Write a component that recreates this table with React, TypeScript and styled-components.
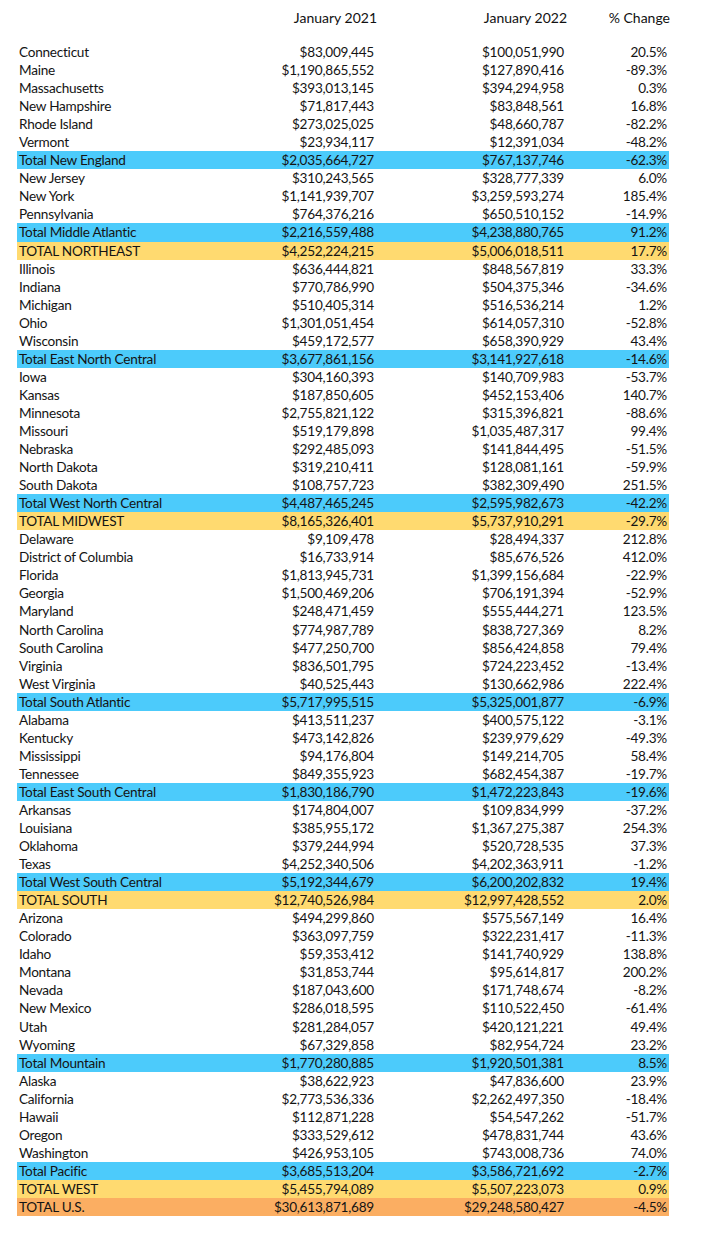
import React from "react";
import styled, { createGlobalStyle } from "styled-components";

const Global = createGlobalStyle`
  html, body { margin: 0; padding: 0; background: #ffffff; }
  body { font-family: "Lato", "Liberation Sans", sans-serif; color: #111; }
`;

type Kind = "state" | "division" | "region" | "total";
type Row = [string, string, string, string, Kind];

const rows: Row[] = [
  ["Connecticut", "$83,009,445", "$100,051,990", "20.5%", "state"],
  ["Maine", "$1,190,865,552", "$127,890,416", "-89.3%", "state"],
  ["Massachusetts", "$393,013,145", "$394,294,958", "0.3%", "state"],
  ["New Hampshire", "$71,817,443", "$83,848,561", "16.8%", "state"],
  ["Rhode Island", "$273,025,025", "$48,660,787", "-82.2%", "state"],
  ["Vermont", "$23,934,117", "$12,391,034", "-48.2%", "state"],
  ["Total New England", "$2,035,664,727", "$767,137,746", "-62.3%", "division"],
  ["New Jersey", "$310,243,565", "$328,777,339", "6.0%", "state"],
  ["New York", "$1,141,939,707", "$3,259,593,274", "185.4%", "state"],
  ["Pennsylvania", "$764,376,216", "$650,510,152", "-14.9%", "state"],
  ["Total Middle Atlantic", "$2,216,559,488", "$4,238,880,765", "91.2%", "division"],
  ["TOTAL NORTHEAST", "$4,252,224,215", "$5,006,018,511", "17.7%", "region"],
  ["Illinois", "$636,444,821", "$848,567,819", "33.3%", "state"],
  ["Indiana", "$770,786,990", "$504,375,346", "-34.6%", "state"],
  ["Michigan", "$510,405,314", "$516,536,214", "1.2%", "state"],
  ["Ohio", "$1,301,051,454", "$614,057,310", "-52.8%", "state"],
  ["Wisconsin", "$459,172,577", "$658,390,929", "43.4%", "state"],
  ["Total East North Central", "$3,677,861,156", "$3,141,927,618", "-14.6%", "division"],
  ["Iowa", "$304,160,393", "$140,709,983", "-53.7%", "state"],
  ["Kansas", "$187,850,605", "$452,153,406", "140.7%", "state"],
  ["Minnesota", "$2,755,821,122", "$315,396,821", "-88.6%", "state"],
  ["Missouri", "$519,179,898", "$1,035,487,317", "99.4%", "state"],
  ["Nebraska", "$292,485,093", "$141,844,495", "-51.5%", "state"],
  ["North Dakota", "$319,210,411", "$128,081,161", "-59.9%", "state"],
  ["South Dakota", "$108,757,723", "$382,309,490", "251.5%", "state"],
  ["Total West North Central", "$4,487,465,245", "$2,595,982,673", "-42.2%", "division"],
  ["TOTAL MIDWEST", "$8,165,326,401", "$5,737,910,291", "-29.7%", "region"],
  ["Delaware", "$9,109,478", "$28,494,337", "212.8%", "state"],
  ["District of Columbia", "$16,733,914", "$85,676,526", "412.0%", "state"],
  ["Florida", "$1,813,945,731", "$1,399,156,684", "-22.9%", "state"],
  ["Georgia", "$1,500,469,206", "$706,191,394", "-52.9%", "state"],
  ["Maryland", "$248,471,459", "$555,444,271", "123.5%", "state"],
  ["North Carolina", "$774,987,789", "$838,727,369", "8.2%", "state"],
  ["South Carolina", "$477,250,700", "$856,424,858", "79.4%", "state"],
  ["Virginia", "$836,501,795", "$724,223,452", "-13.4%", "state"],
  ["West Virginia", "$40,525,443", "$130,662,986", "222.4%", "state"],
  ["Total South Atlantic", "$5,717,995,515", "$5,325,001,877", "-6.9%", "division"],
  ["Alabama", "$413,511,237", "$400,575,122", "-3.1%", "state"],
  ["Kentucky", "$473,142,826", "$239,979,629", "-49.3%", "state"],
  ["Mississippi", "$94,176,804", "$149,214,705", "58.4%", "state"],
  ["Tennessee", "$849,355,923", "$682,454,387", "-19.7%", "state"],
  ["Total East South Central", "$1,830,186,790", "$1,472,223,843", "-19.6%", "division"],
  ["Arkansas", "$174,804,007", "$109,834,999", "-37.2%", "state"],
  ["Louisiana", "$385,955,172", "$1,367,275,387", "254.3%", "state"],
  ["Oklahoma", "$379,244,994", "$520,728,535", "37.3%", "state"],
  ["Texas", "$4,252,340,506", "$4,202,363,911", "-1.2%", "state"],
  ["Total West South Central", "$5,192,344,679", "$6,200,202,832", "19.4%", "division"],
  ["TOTAL SOUTH", "$12,740,526,984", "$12,997,428,552", "2.0%", "region"],
  ["Arizona", "$494,299,860", "$575,567,149", "16.4%", "state"],
  ["Colorado", "$363,097,759", "$322,231,417", "-11.3%", "state"],
  ["Idaho", "$59,353,412", "$141,740,929", "138.8%", "state"],
  ["Montana", "$31,853,744", "$95,614,817", "200.2%", "state"],
  ["Nevada", "$187,043,600", "$171,748,674", "-8.2%", "state"],
  ["New Mexico", "$286,018,595", "$110,522,450", "-61.4%", "state"],
  ["Utah", "$281,284,057", "$420,121,221", "49.4%", "state"],
  ["Wyoming", "$67,329,858", "$82,954,724", "23.2%", "state"],
  ["Total Mountain", "$1,770,280,885", "$1,920,501,381", "8.5%", "division"],
  ["Alaska", "$38,622,923", "$47,836,600", "23.9%", "state"],
  ["California", "$2,773,536,336", "$2,262,497,350", "-18.4%", "state"],
  ["Hawaii", "$112,871,228", "$54,547,262", "-51.7%", "state"],
  ["Oregon", "$333,529,612", "$478,831,744", "43.6%", "state"],
  ["Washington", "$426,953,105", "$743,008,736", "74.0%", "state"],
  ["Total Pacific", "$3,685,513,204", "$3,586,721,692", "-2.7%", "division"],
  ["TOTAL WEST", "$5,455,794,089", "$5,507,223,073", "0.9%", "region"],
  ["TOTAL U.S.", "$30,613,871,689", "$29,248,580,427", "-4.5%", "total"],
];

const bg: Record<Kind, string> = {
  state: "transparent",
  division: "#4ccbfb",
  region: "#ffda70",
  total: "#fbae62",
};

const Sheet = styled.div`
  width: 652px;
  padding: 0 0 0 17px;
`;

const Grid = styled.div`
  display: grid;
  grid-template-columns: 200px 157px 190px 103px;
  padding-right: 2px;
`;

const HeaderRow = styled(Grid)`
  height: 34px;
  margin-bottom: 9px;
  align-items: center;
`;

const HeaderCell = styled.div`
  font-family: "Lato", "Liberation Sans", sans-serif;
  font-size: 14px;
  text-align: right;
  margin-right: -3px;
  color: #111;
  white-space: nowrap;
`;

const DataRow = styled(Grid)<{ $kind: Kind }>`
  height: 18.05px;
  line-height: 18.05px;
  background: ${(p) => bg[p.$kind]};
  font-size: 13.6px;
  letter-spacing: -0.25px;
  color: #141414;
`;

const Label = styled.div`
  padding-left: 2px;
  white-space: nowrap;
`;

const Num = styled.div`
  text-align: right;
  white-space: nowrap;
`;

export default function App() {
  return (
    <>
      <Global />
      <Sheet>
        <HeaderRow>
          <div />
          <HeaderCell>January 2021</HeaderCell>
          <HeaderCell>January 2022</HeaderCell>
          <HeaderCell>% Change</HeaderCell>
        </HeaderRow>
        {rows.map(([label, a, b, c, kind]) => (
          <DataRow key={label} $kind={kind}>
            <Label>{label}</Label>
            <Num>{a}</Num>
            <Num>{b}</Num>
            <Num>{c}</Num>
          </DataRow>
        ))}
      </Sheet>
    </>
  );
}
